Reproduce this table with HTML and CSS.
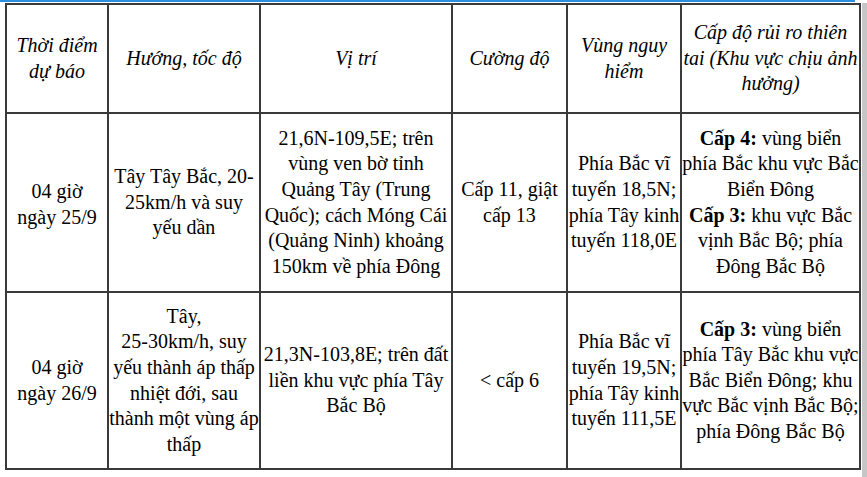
FILE: index.html
```html
<!DOCTYPE html>
<html lang="vi">
<head>
<meta charset="utf-8">
<link rel="stylesheet" href="styles.css">
</head>
<body>
<div class="topbar"></div>
<div class="frame">
  <table class="forecast">
    <colgroup>
      <col class="c1"><col class="c2"><col class="c3"><col class="c4"><col class="c5"><col class="c6">
    </colgroup>
    <tr class="head">
      <th>Thời điểm<br>dự báo</th>
      <th>Hướng, tốc độ</th>
      <th>Vị trí</th>
      <th>Cường độ</th>
      <th>Vùng nguy<br>hiểm</th>
      <th>Cấp độ rủi ro thiên<br>tai (Khu vực chịu ảnh<br>hưởng)</th>
    </tr>
    <tr class="r1">
      <td class="when">04 giờ<br>ngày 25/9</td>
      <td>Tây Tây Bắc, 20-<br>25km/h và suy<br>yếu dần</td>
      <td>21,6N-109,5E; trên<br>vùng ven bờ tỉnh<br>Quảng Tây (Trung<br>Quốc); cách Móng Cái<br>(Quảng Ninh) khoảng<br>150km về phía Đông</td>
      <td>Cấp 11, giật<br>cấp 13</td>
      <td>Phía Bắc vĩ<br>tuyến 18,5N;<br>phía Tây kinh<br>tuyến 118,0E</td>
      <td><b>Cấp 4:</b> vùng biển<br>phía Bắc khu vực Bắc<br>Biển Đông<br><b>Cấp 3:</b> khu vực Bắc<br>vịnh Bắc Bộ; phía<br>Đông Bắc Bộ</td>
    </tr>
    <tr class="r2">
      <td>04 giờ<br>ngày 26/9</td>
      <td>Tây,<br>25-30km/h, suy<br>yếu thành áp thấp<br>nhiệt đới, sau<br>thành một vùng áp<br>thấp</td>
      <td>21,3N-103,8E; trên đất<br>liền khu vực phía Tây<br>Bắc Bộ</td>
      <td>&lt; cấp 6</td>
      <td>Phía Bắc vĩ<br>tuyến 19,5N;<br>phía Tây kinh<br>tuyến 111,5E</td>
      <td><b>Cấp 3:</b> vùng biển<br>phía Tây Bắc khu vực<br>Bắc Biển Đông; khu<br>vực Bắc vịnh Bắc Bộ;<br>phía Đông Bắc Bộ</td>
    </tr>
  </table>
  <div class="strip"></div>
</div>
</body>
</html>
```

FILE: styles.css
```css
html, body {
  margin: 0;
  padding: 0;
  background: #ffffff;
}
body {
  font-family: "Liberation Serif", "Times New Roman", serif;
  color: #000000;
  width: 867px;
  height: 477px;
  overflow: hidden;
}
.topbar {
  width: 855px;
  height: 2px;
  background: #2a8fe0;
}
.frame {
  display: flex;
  align-items: flex-start;
  padding-left: 5px;
  margin-top: 1px;
}
.strip {
  width: 6px;
  margin-left: 1px;
  background: #c6c6c6;
  height: 474px;
}
.forecast {
  border-collapse: collapse;
  table-layout: fixed;
  width: 856px;
  font-size: 20px;
  line-height: 25.6px;
}
.c1 { width: 102px; }
.c2 { width: 152px; }
.c3 { width: 192px; }
.c4 { width: 115px; }
.c5 { width: 114px; }
.c6 { width: 179px; }
.forecast th,
.forecast td {
  border: 2px solid #3a3a3a;
  padding: 0;
  text-align: center;
  vertical-align: middle;
  white-space: nowrap;
}
.forecast th {
  font-style: italic;
  font-weight: normal;
}
.forecast td.when {
  padding-top: 4px;
}
.head { height: 109px; }
.r1 { height: 179px; }
.r2 { height: 177px; }
```
